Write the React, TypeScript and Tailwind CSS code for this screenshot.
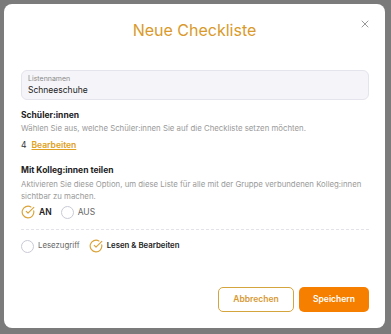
import { CircleCheckBig, X } from 'lucide-react'

function Checked({ label, bold }: { label: string; bold?: boolean }) {
  return (
    <div className="flex items-center gap-[4px]">
      <CircleCheckBig className="w-[14px] h-[14px] text-[#d9a43a]" strokeWidth={2} />
      <span className={bold ? 'font-semibold text-[#222]' : 'text-[#666]'}>{label}</span>
    </div>
  )
}

function Unchecked({ label, bold }: { label: string; bold?: boolean }) {
  return (
    <div className="flex items-center gap-[4px]">
      <span className="w-[13px] h-[13px] rounded-full border border-[#c9cad6] bg-white" />
      <span className={bold ? 'font-semibold text-[#222]' : 'text-[#666]'}>{label}</span>
    </div>
  )
}

export default function App() {
  return (
    <div className="w-[391px] h-[334px] bg-[#7b7b7b] pt-[4px] pl-[4px] font-['Inter',sans-serif]">
      <div className="relative w-[381px] h-[324px] bg-white rounded-[8px] pl-[17px] pr-[14px] pt-[14px]">
        {/* Title */}
        <h1 className="h-[24px] leading-[24px] text-center text-[16px] text-[#d99a2b] pr-[3px]">
          Neue Checkliste
        </h1>
        <button className="absolute right-[14px] top-[14px] text-[#777]">
          <X className="w-[12px] h-[12px]" strokeWidth={1.5} />
        </button>

        {/* List name input */}
        <div className="mt-[28px] mr-[2px] h-[30px] rounded-[6px] border border-[#e3e4ec] bg-[#f5f5f9] px-[6px] pt-[3px]">
          <div className="text-[7px] leading-[10px] text-[#8a8a8a]">Listennamen</div>
          <div className="text-[8.5px] leading-[12px] text-[#222]">Schneeschuhe</div>
        </div>

        {/* Students */}
        <div className="mt-[9px] text-[8.5px] leading-[12px] font-bold text-[#222]">
          Schüler:innen
        </div>
        <p className="mt-[1px] text-[7.8px] leading-[12px] text-[#9a9a9a]">
          Wählen Sie aus, welche Schüler:innen Sie auf die Checkliste setzen möchten.
        </p>
        <div className="mt-[5px] flex items-center gap-[5px] text-[8.5px] leading-[12px]">
          <span className="text-[#333]">4</span>
          <a className="font-semibold text-[#e0a020] underline underline-offset-1">Bearbeiten</a>
        </div>

        {/* Share */}
        <div className="mt-[13px] text-[8.5px] leading-[12px] font-bold text-[#222]">
          Mit Kolleg:innen teilen
        </div>
        <p className="mt-[2px] text-[7.8px] leading-[12px] text-[#9a9a9a]">
          Aktivieren Sie diese Option, um diese Liste für alle mit der Gruppe verbundenen Kolleg:innen
          sichtbar zu machen.
        </p>
        <div className="mt-[3px] h-[14px] flex items-center gap-[9px] text-[8.5px]">
          <Checked label="AN" bold />
          <Unchecked label="AUS" />
        </div>

        <div className="mt-[10px] mr-[2px] border-t border-dashed border-[#e2e2e8]" />

        <div className="mt-[9px] h-[14px] flex items-center gap-[9px] text-[7.8px]">
          <Unchecked label="Lesezugriff" />
          <Checked label="Lesen & Bearbeiten" bold />
        </div>

        {/* Actions */}
        <div className="mt-[34px] mr-[2px] flex justify-end gap-[5px] text-[8.5px] font-semibold">
          <button className="w-[76px] h-[25px] rounded-[5px] border border-[#d4a53c] text-[#d79a35] bg-white">
            Abbrechen
          </button>
          <button className="w-[70px] h-[25px] rounded-[5px] bg-[#f77f00] text-white">
            Speichern
          </button>
        </div>
      </div>
    </div>
  )
}
